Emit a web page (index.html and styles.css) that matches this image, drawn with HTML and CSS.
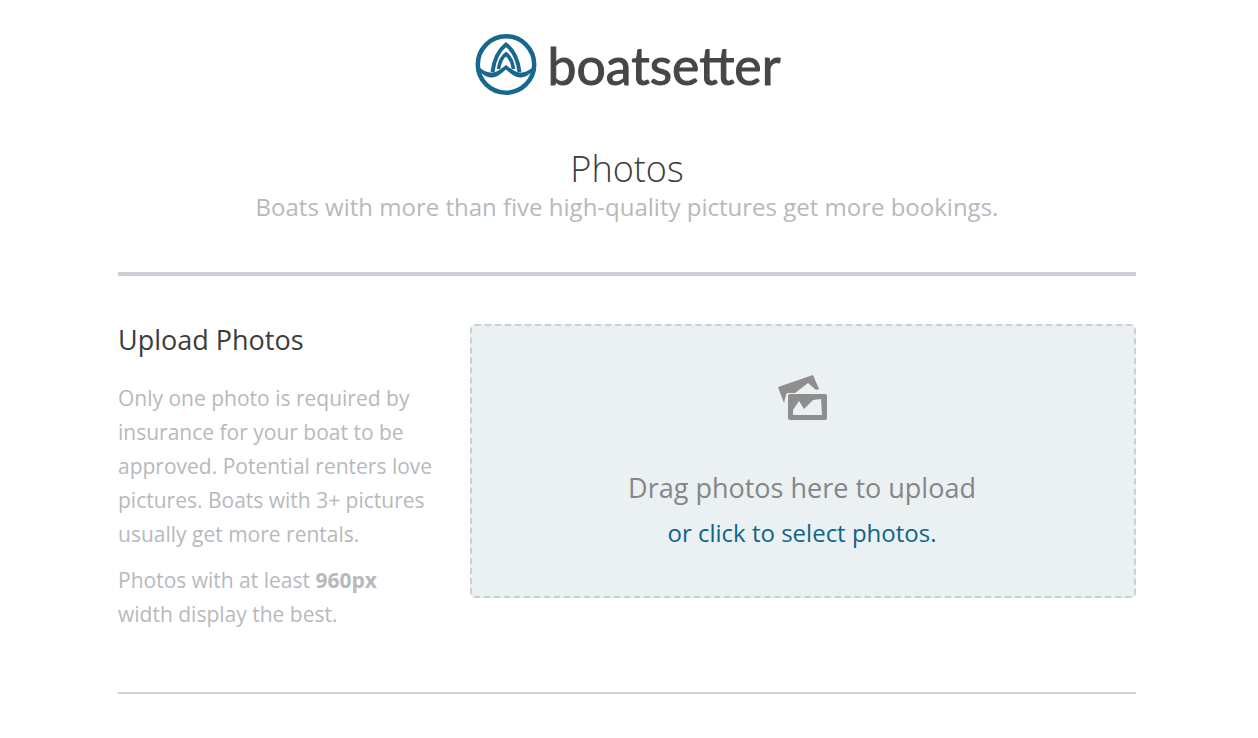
FILE: index.html
```html
<!DOCTYPE html>
<html lang="en">
<head>
    <meta charset="UTF-8">
    <title>Boatsetter - Photos</title>
    <link rel="stylesheet" href="styles.css">
</head>
<body>
    <header class="logo">
        <svg class="logo-mark" width="64" height="62" viewBox="0 0 64 62">
            <circle cx="32" cy="30.5" r="28.2" fill="none" stroke="#17678f" stroke-width="4.5"/>
            <path d="M18.5 38 C20 26 25 16 32 10.5 C39 16 44 26 45.5 38" fill="none" stroke="#17678f" stroke-width="4"/>
            <path d="M24.5 35 C25.5 28 28 23 32 20 C36 23 38.5 28 39.5 35" fill="none" stroke="#17678f" stroke-width="3.5"/>
            <path d="M4 32 C8 36 12 38.5 18 38.5 C23 38.5 28 34 32 31 C36 34 41 38.5 46 38.5 C52 38.5 56 36 60 32 L60 36 C55 41 51 43.5 46 43.5 C41 43.5 36 39 32 35.5 C28 39 23 43.5 18 43.5 C13 43.5 9 41 4 36Z" fill="#17678f"/>
        </svg>
        <span class="logo-text">boatsetter</span>
    </header>

    <main class="page">
        <div class="intro">
            <h1>Photos</h1>
            <p>Boats with more than five high-quality pictures get more bookings.</p>
        </div>

        <section class="upload">
            <div class="upload-help">
                <h2>Upload Photos</h2>
                <p>Only one photo is required by insurance for your boat to be approved. Potential renters love pictures. Boats with 3+ pictures usually get more rentals.</p>
                <p>Photos with at least <b>960px</b> width display the best.</p>
            </div>
            <div class="dropzone">
                <svg class="dropzone-icon" width="49" height="46" viewBox="0 0 49 46">
                    <path d="M0 12 L35 0 L41 14 L38 15 L30 8 L17 18 L10 18 Q8 18 8 20 L6 28 Z" fill="#8e8e8e"/>
                    <path fill-rule="evenodd" d="M12 19 H47 Q49 19 49 21 V43 Q49 45 47 45 H12 Q10 45 10 43 V21 Q10 19 12 19Z M15 40 H44 L43 24 L35 25 L26 34 L21 26 L15 35Z" fill="#8e8e8e"/>
                </svg>
                <div class="dropzone-title">Drag photos here to upload</div>
                <a class="dropzone-link" href="#">or click to select photos.</a>
            </div>
        </section>
    </main>
</body>
</html>
```

FILE: styles.css
```css
body {
    margin: 0;
    padding-right: 4px;
    background: #fff;
    font-family: "Open Sans", sans-serif;
    color: #3c3c3c;
}

.logo {
    display: flex;
    justify-content: center;
    align-items: center;
    gap: 10px;
    height: 130px;
    box-sizing: border-box;
}
.logo-text {
    font-family: Lato, sans-serif;
    font-weight: 400;
    font-size: 51.7px;
    line-height: 60px;
    color: #464646;
    -webkit-text-stroke: 1px #464646;
}

.page {
    width: 1018px;
    margin: 0 auto;
}

.intro {
    text-align: center;
    padding-top: 15px;
    padding-bottom: 51px;
    border-bottom: 4px solid #ccced6;
}
.intro h1 {
    margin: 0;
    font-weight: 300;
    font-size: 36px;
    line-height: 48px;
}
.intro p {
    margin: 0;
    font-size: 24px;
    line-height: 28px;
    color: #b7b9bc;
}

.upload {
    display: flex;
    justify-content: space-between;
    padding: 48px 0 61px;
    border-bottom: 2px solid #d0d2d5;
}
.upload-help {
    width: 316px;
}
.upload-help h2 {
    margin: -1px 0 24px;
    font-weight: 400;
    font-size: 27px;
    line-height: 34px;
}
.upload-help p {
    margin: 0 0 12px;
    font-size: 21px;
    line-height: 34px;
    color: #b7b9bc;
}
.upload-help p:last-child {
    margin-bottom: 0;
}

.dropzone {
    width: 666px;
    height: 274px;
    box-sizing: border-box;
    display: flex;
    flex-direction: column;
    align-items: center;
    background: #ebf0f3;
    border: 2px dashed #c8d0d4;
    border-radius: 5px;
    padding: 49px 2px 0 0;
}
.dropzone-icon {
    margin-bottom: 49px;
}
.dropzone-title {
    font-size: 27px;
    line-height: 36px;
    color: #868686;
}
.dropzone-link {
    margin-top: 11px;
    font-size: 24px;
    line-height: 32px;
    color: #0f6587;
    text-decoration: none;
}
```
